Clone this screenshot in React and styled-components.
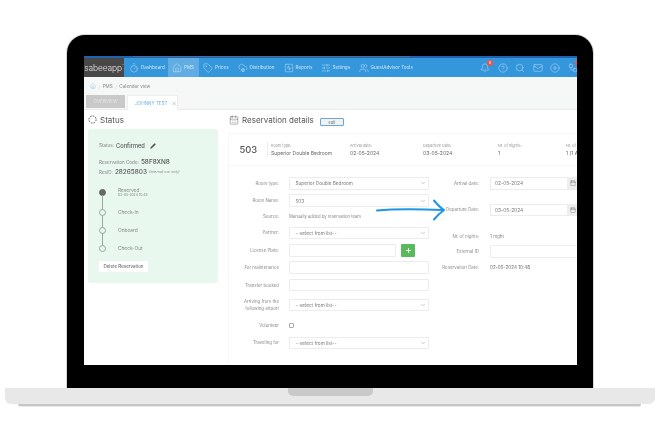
import React from 'react';
import styled, { createGlobalStyle } from 'styled-components';
import {
  Bell, Calendar, CalendarDays, ChevronDown, CircleHelp, CirclePlus, CloudCog, House,
  Mail, Pencil, Plus, Search, SlidersHorizontal, SquareActivity, Tag, Timer, Users, Workflow, X,
} from 'lucide-react';

const GlobalStyle = createGlobalStyle`
  html, body {
    margin: 0;
    background: #fff;
    font-family: "Inter", "Liberation Sans", sans-serif;
  }
  * { box-sizing: border-box; }
`;

const navItems = [
  { label: 'Dashboard', icon: Timer, width: 39 },
  { label: 'PMS', icon: House, width: 31, active: true },
  { label: 'Prices', icon: Tag, width: 34.5 },
  { label: 'Distribution', icon: CloudCog, width: 46 },
  { label: 'Reports', icon: SquareActivity, width: 37 },
  { label: 'Settings', icon: SlidersHorizontal, width: 38 },
  { label: 'GuestAdvisor Tools', icon: Users, width: 58 },
];

const timeline = [
  { label: 'Reserved', date: '02-05-2024 10:48', done: true },
  { label: 'Check-In' },
  { label: 'Onboard' },
  { label: 'Check-Out' },
];

const Select = ({ value }) => (
  <SelectBox>
    {value}
    <ChevronDown size={6} strokeWidth={1.5} />
  </SelectBox>
);

const DateField = ({ value }) => (
  <DateBox>
    <DateValue>{value}</DateValue>
    <DateAddon><Calendar size={6} strokeWidth={1.5} /></DateAddon>
  </DateBox>
);

export default function App() {
  return (
    <Page>
      <GlobalStyle />
      <Lid>
        <Screen>
          <TopStrip><span /></TopStrip>
          <Nav>
            <Logo>sabeeapp<sup>™</sup></Logo>
            {navItems.map(({ label, icon: Icon, width, active }) => (
              <NavItem key={label} $active={active} $width={width}>
                <Icon size={10} strokeWidth={1.1} />
                {label}
              </NavItem>
            ))}
            <NavTools>
              <NavTool><Bell size={10} strokeWidth={1.1} /><Badge>6</Badge></NavTool>
              <NavTool><CircleHelp size={10} strokeWidth={1.1} /></NavTool>
              <NavTool><Search size={10} strokeWidth={1.1} /></NavTool>
              <NavTool><Mail size={10} strokeWidth={1.1} /></NavTool>
              <NavTool><CirclePlus size={10} strokeWidth={1.1} /></NavTool>
              <NavTool><Workflow size={10} strokeWidth={1.1} /><Badge>1</Badge></NavTool>
            </NavTools>
          </Nav>

          <SubHeader>
            <Breadcrumb>
              <House size={6} strokeWidth={1.2} color="#7fb5dc" />
              <Sep>/</Sep>
              <span>PMS</span>
              <Sep>/</Sep>
              <span>Calendar view</span>
            </Breadcrumb>
            <Tabs>
              <GreyTab>OVERVIEW</GreyTab>
              <ActiveTab>JOHNNY TEST <X size={7} strokeWidth={1} color="#555" /></ActiveTab>
            </Tabs>
          </SubHeader>

          <Content>
            <StatusColumn>
              <Heading>
                <svg width="9" height="9" viewBox="0 0 10 10" fill="none" stroke="currentColor" strokeWidth="1.1">
                  <circle cx="5" cy="5" r="4" strokeDasharray="1.8 1.3" />
                </svg>
                Status
              </Heading>
              <StatusCard>
                <StatusLine>
                  <Muted>Status:</Muted> <Strong $small>Confirmed</Strong>
                  <Pencil size={6} fill="#555" strokeWidth={1} />
                </StatusLine>
                <CodeLine><Muted>Reservation Code:</Muted> <Strong>58F8XN8</Strong></CodeLine>
                <CodeLine><Muted>ResID:</Muted> <Strong>28265803</Strong> <Note>(internal use only)</Note></CodeLine>
                <Timeline>
                  {timeline.map(({ label, date, done }) => (
                    <Step key={label} $tall={done}>
                      <Dot $done={done} />
                      <StepText>
                        {label}
                        {date && <StepDate>{date}</StepDate>}
                      </StepText>
                    </Step>
                  ))}
                </Timeline>
                <DeleteButton>Delete Reservation</DeleteButton>
              </StatusCard>
            </StatusColumn>

            <DetailsColumn>
              <DetailsHeading>
                <Heading><CalendarDays size={10} strokeWidth={1.1} /> Reservation details</Heading>
                <EditButton>Edit</EditButton>
              </DetailsHeading>
              <DetailsBody>
                <Summary>
                  <RoomNumber>503</RoomNumber>
                  <SummaryCell $width={79}><small>Room type:</small>Superior Double Bedroom</SummaryCell>
                  <SummaryCell $width={73}><small>Arrival date:</small>02-05-2024</SummaryCell>
                  <SummaryCell $width={75}><small>Departure Date:</small>03-05-2024</SummaryCell>
                  <SummaryCell $width={68}><small>Nr. of nights::</small>1</SummaryCell>
                  <SummaryCell $width={40}><small>Nr. of guests:</small>1 (1 Adult)</SummaryCell>
                </Summary>

                <Form>
                  <FormColumn>
                    <Row><Label>Room type:</Label><Select value="Superior Double Bedroom" /></Row>
                    <Row><Label>Room Name:</Label><Select value="503" /></Row>
                    <Row $height={10}><Label>Source:</Label><Plain $small>Manually added by reservation team</Plain></Row>
                    <Row><Label>Partner:</Label><Select value="--select from list--" /></Row>
                    <Row>
                      <Label>License Plate:</Label>
                      <Input $width={107} />
                      <AddButton><Plus size={7} strokeWidth={3} /></AddButton>
                    </Row>
                    <Row><Label>For maintenance</Label><Input /></Row>
                    <Row><Label>Transfer booked</Label><Input /></Row>
                    <Row $height={18}>
                      <Label>Arriving from the following airport</Label>
                      <Select value="--select from list--" />
                    </Row>
                    <Row><Label>Volunteer</Label><Checkbox /></Row>
                    <Row><Label>Traveling for</Label><Select value="--select from list--" /></Row>
                  </FormColumn>

                  <SideColumn>
                    <SideRow><SideLabel>Arrival date:</SideLabel><DateField value="02-05-2024" /></SideRow>
                    <SideRow $top={14}><SideLabel>Departure Date:</SideLabel><DateField value="03-05-2024" /></SideRow>
                    <SideRow $top={15} $height={10}><SideLabel>Nr. of nights:</SideLabel><Plain>1 night</Plain></SideRow>
                    <SideRow $top={4}><SideLabel>External ID</SideLabel><Input $width={100} /></SideRow>
                    <SideRow $top={5} $height={10}><SideLabel>Reservation Date:</SideLabel><Plain $dark>02-05-2024 10:48</Plain></SideRow>
                  </SideColumn>
                </Form>
              </DetailsBody>
            </DetailsColumn>
          </Content>

          <Arrow viewBox="0 0 70 22" fill="none" stroke="#1e96e6" strokeLinecap="round" strokeLinejoin="round">
            <path d="M1 11.5C20 9.5 45 10 67 11" strokeWidth="2" />
            <path d="M58 1.5C61 5 64 8.5 68 11C64 14 61 17 58 20.5" strokeWidth="2" />
          </Arrow>
        </Screen>
      </Lid>
      <Base><Notch /></Base>
      <BaseShadow />
    </Page>
  );
}

const Page = styled.div`
  width: 660px;
  height: 440px;
  padding-top: 35px;
  overflow: hidden;
  background: #fff;
`;

const Lid = styled.div`
  width: 526px;
  height: 353px;
  margin-left: 67px;
  padding: 21px 16px 23px 17px;
  background: #000;
  border-radius: 18px 18px 0 0;
  box-shadow: 0 0 0 1px #d8d8d8;
`;

const Screen = styled.div`
  position: relative;
  height: 100%;
  overflow: hidden;
  display: flex;
  flex-direction: column;
  background: #fff;
  filter: blur(0.3px);
`;

const TopStrip = styled.div`
  height: 2px;
  padding-left: 49px;
  background: #1f62ae;

  span {
    display: block;
    width: 277px;
    height: 1px;
    background: #4a6d9c;
  }
`;

const Nav = styled.nav`
  height: 19px;
  display: flex;
  align-items: stretch;
  background: #3597db;
  color: #cfe6f6;
  font-size: 4.6px;
`;

const Logo = styled.div`
  width: 40px;
  margin-right: 5px;
  display: flex;
  align-items: center;
  justify-content: center;
  background: #484848;
  color: #e4e4e4;
  font-size: 8.4px;
  font-weight: 300;
  letter-spacing: -0.1px;

  sup {
    font-size: 3px;
    margin-bottom: 4px;
  }
`;

const NavItem = styled.div`
  width: ${(p) => p.$width}px;
  padding-left: ${(p) => (p.$active ? 4 : 0)}px;
  margin-right: ${(p) => (p.$active ? 4 : 0)}px;
  display: flex;
  align-items: center;
  gap: 2px;
  white-space: nowrap;
  background: ${(p) => (p.$active ? '#61ade3' : 'transparent')};
`;

const NavTools = styled.div`
  margin-left: auto;
  display: flex;
  align-items: center;
  gap: 7.6px;
  margin-right: -1px;
  color: #cfe5f5;
`;

const NavTool = styled.div`
  position: relative;
  width: 10px;
  height: 10px;
`;

const Badge = styled.span`
  position: absolute;
  top: -3px;
  right: -3px;
  width: 6px;
  height: 6px;
  border-radius: 50%;
  background: #ef5350;
  color: #fff;
  font-size: 3.5px;
  line-height: 6px;
  text-align: center;
`;

const SubHeader = styled.div`
  height: 33px;
  display: flex;
  flex-direction: column;
  background: #f6f7f7;
  border-bottom: 1px solid #ebebeb;
`;

const Breadcrumb = styled.div`
  height: 18px;
  padding-left: 6px;
  display: flex;
  align-items: center;
  gap: 2.5px;
  color: #8a8a8a;
  font-size: 4.6px;
`;

const Sep = styled.span`
  color: #ccc;
`;

const Tabs = styled.div`
  flex: 1;
  padding-left: 2px;
  display: flex;
  gap: 2px;
`;

const GreyTab = styled.div`
  width: 39px;
  margin-bottom: 1px;
  display: flex;
  align-items: center;
  justify-content: center;
  background: #c9c9c9;
  color: #e6e6e6;
  font-size: 4.6px;
`;

const ActiveTab = styled.div`
  width: 51px;
  margin-bottom: -1px;
  padding-left: 7px;
  display: flex;
  align-items: center;
  gap: 3px;
  background: #fff;
  border: 1px solid #eee;
  border-bottom: 0;
  color: #6fb3e0;
  font-size: 4.6px;
  white-space: nowrap;
`;

const Content = styled.div`
  flex: 1;
  display: flex;
  padding-left: 4px;
  min-height: 0;
`;

const StatusColumn = styled.div`
  width: 130px;
  flex-shrink: 0;
`;

const Heading = styled.div`
  height: 19px;
  display: flex;
  align-items: center;
  gap: 3px;
  color: #555;
  font-size: 8px;
  white-space: nowrap;
`;

const StatusCard = styled.div`
  height: 154px;
  padding: 12px 0 0 11px;
  background: #e8f8ef;
  border-radius: 3px;
  color: #666;
`;

const Muted = styled.span`
  color: #888;
  font-size: 4.6px;
`;

const Strong = styled.span`
  color: #555;
  font-size: ${(p) => (p.$small ? 5.7 : 6.4)}px;
  font-weight: 500;
`;

const StatusLine = styled.div`
  height: 9px;
  display: flex;
  align-items: center;
  gap: 2px;
  margin-bottom: 7px;

  svg {
    margin-left: 3px;
    color: #555;
  }
`;

const CodeLine = styled.div`
  height: 10px;
  display: flex;
  align-items: center;
  gap: 2px;
`;

const Note = styled.span`
  color: #888;
  font-size: 3.6px;
  font-style: italic;
`;

const Timeline = styled.div`
  margin: 10px 0 0 -0.5px;
  display: flex;
  flex-direction: column;
  gap: 8px;
`;

const Step = styled.div`
  position: relative;
  height: 10px;
  margin-bottom: ${(p) => (p.$tall ? 2 : 0)}px;
  display: flex;
  align-items: center;
  gap: 12.5px;

  &:not(:last-child)::after {
    content: '';
    position: absolute;
    left: 3px;
    top: 8px;
    width: 1px;
    height: ${(p) => (p.$tall ? 15 : 13)}px;
    background: #9aa89f;
  }
`;

const Dot = styled.span`
  width: 7px;
  height: 7px;
  flex-shrink: 0;
  border-radius: 50%;
  background: ${(p) => (p.$done ? '#666' : '#e8f8ef')};
  border: 0.6px solid ${(p) => (p.$done ? '#666' : '#9aa89f')};
`;

const StepText = styled.div`
  color: #888;
  font-size: 4.8px;
  line-height: 6px;
`;

const StepDate = styled.div`
  font-size: 3.4px;
  line-height: 4px;
`;

const DeleteButton = styled.button`
  display: block;
  width: 49px;
  height: 11px;
  margin-top: 8px;
  padding: 0;
  border: 0;
  border-radius: 1px;
  background: #fff;
  color: #555;
  font-family: inherit;
  font-size: 4.5px;
`;

const DetailsColumn = styled.div`
  flex: 1;
  min-width: 0;
  margin-left: 10px;
  display: flex;
  flex-direction: column;
`;

const DetailsHeading = styled.div`
  height: 23px;
  padding-left: 1px;
  display: flex;
  align-items: flex-start;
  gap: 6px;
`;

const EditButton = styled.button`
  width: 24px;
  height: 8px;
  margin-top: 8px;
  padding: 0;
  border: 1px solid #6aa6d8;
  border-radius: 1px;
  background: #f2f2f2;
  color: #666;
  font-family: inherit;
  font-size: 3.8px;
`;

const DetailsBody = styled.div`
  flex: 1;
  width: 380px;
  border-left: 1px solid #f8f8f8;
`;

const Summary = styled.div`
  height: 33px;
  display: flex;
  align-items: center;
  border-top: 1px solid #f7f7f7;
  border-bottom: 1px solid #f7f7f7;
`;

const RoomNumber = styled.div`
  width: 39px;
  height: 15px;
  padding-left: 10.5px;
  display: flex;
  align-items: center;
  margin-right: 3px;
  border-right: 1px solid #eee;
  color: #555;
  font-size: 9.4px;
  font-weight: 500;
`;

const SummaryCell = styled.div`
  width: ${(p) => p.$width}px;
  flex-shrink: 0;
  color: #666;
  font-size: 5px;
  white-space: nowrap;

  small {
    display: block;
    margin-bottom: 2.5px;
    color: #999;
    font-size: 3.8px;
  }
`;

const Form = styled.div`
  margin-top: 11px;
  display: flex;
`;

const FormColumn = styled.div`
  width: 201px;
  display: flex;
  flex-direction: column;
  gap: 4.9px;
`;

const SideColumn = styled.div`
  display: flex;
  flex-direction: column;
`;

const Row = styled.div`
  height: ${(p) => p.$height || 12.5}px;
  display: flex;
  align-items: center;
`;

const SideRow = styled.div`
  height: ${(p) => p.$height || 12.5}px;
  margin-top: ${(p) => p.$top || 0}px;
  display: flex;
  align-items: center;
`;

const Label = styled.div`
  width: 50px;
  margin-right: 10px;
  flex-shrink: 0;
  color: #8c8c8c;
  font-size: 4.4px;
  line-height: 7px;
  text-align: right;
`;

const SideLabel = styled.div`
  width: 49px;
  margin-right: 11px;
  flex-shrink: 0;
  color: #8c8c8c;
  font-size: 4.4px;
  text-align: right;
  white-space: nowrap;
`;

const fieldBorder = '1px solid #ececec';

const SelectBox = styled.div`
  width: 140px;
  height: 12.5px;
  padding: 0 2px 0 5.5px;
  display: flex;
  align-items: center;
  justify-content: space-between;
  border: ${fieldBorder};
  border-radius: 1px;
  color: #777;
  font-size: 4.7px;
`;

const Input = styled.div`
  width: ${(p) => p.$width || 140}px;
  height: 12.5px;
  flex-shrink: 0;
  border: ${fieldBorder};
  border-radius: 1px;
`;

const Plain = styled.div`
  color: ${(p) => (p.$dark ? '#666' : '#888')};
  font-size: ${(p) => (p.$small ? 4.2 : 4.6)}px;
  white-space: nowrap;
`;

const AddButton = styled.div`
  width: 14px;
  height: 12.5px;
  margin-left: 5px;
  display: flex;
  align-items: center;
  justify-content: center;
  border-radius: 1px;
  background: #5cb85c;
  color: #fff;
`;

const Checkbox = styled.span`
  width: 5px;
  height: 5px;
  border: 0.7px solid #aaa;
  border-radius: 1px;
`;

const DateBox = styled.div`
  width: 100px;
  height: 12.5px;
  flex-shrink: 0;
  display: flex;
  border: ${fieldBorder};
`;

const DateValue = styled.div`
  width: 76px;
  padding-left: 4px;
  display: flex;
  align-items: center;
  color: #777;
  font-size: 4.8px;
`;

const DateAddon = styled.div`
  width: 12px;
  display: flex;
  align-items: center;
  justify-content: center;
  background: #eee;
  color: #666;
`;

const Arrow = styled.svg`
  position: absolute;
  left: 292px;
  top: 143px;
  width: 70px;
  height: 22px;
`;

const Base = styled.div`
  width: 650px;
  height: 16px;
  margin-left: 5px;
  display: flex;
  justify-content: center;
  background: #e8e8e8;
  border-radius: 0 0 6px 6px;
`;

const Notch = styled.div`
  width: 85px;
  height: 8px;
  background: #c9c9c9;
  border-radius: 0 0 5px 5px;
`;

const BaseShadow = styled.div`
  width: 623px;
  height: 2px;
  margin-left: 18px;
  background: #c6c6c6;
  border-radius: 0 0 3px 3px;
  box-shadow: 0 1px 0 #e8e8e8;
`;
